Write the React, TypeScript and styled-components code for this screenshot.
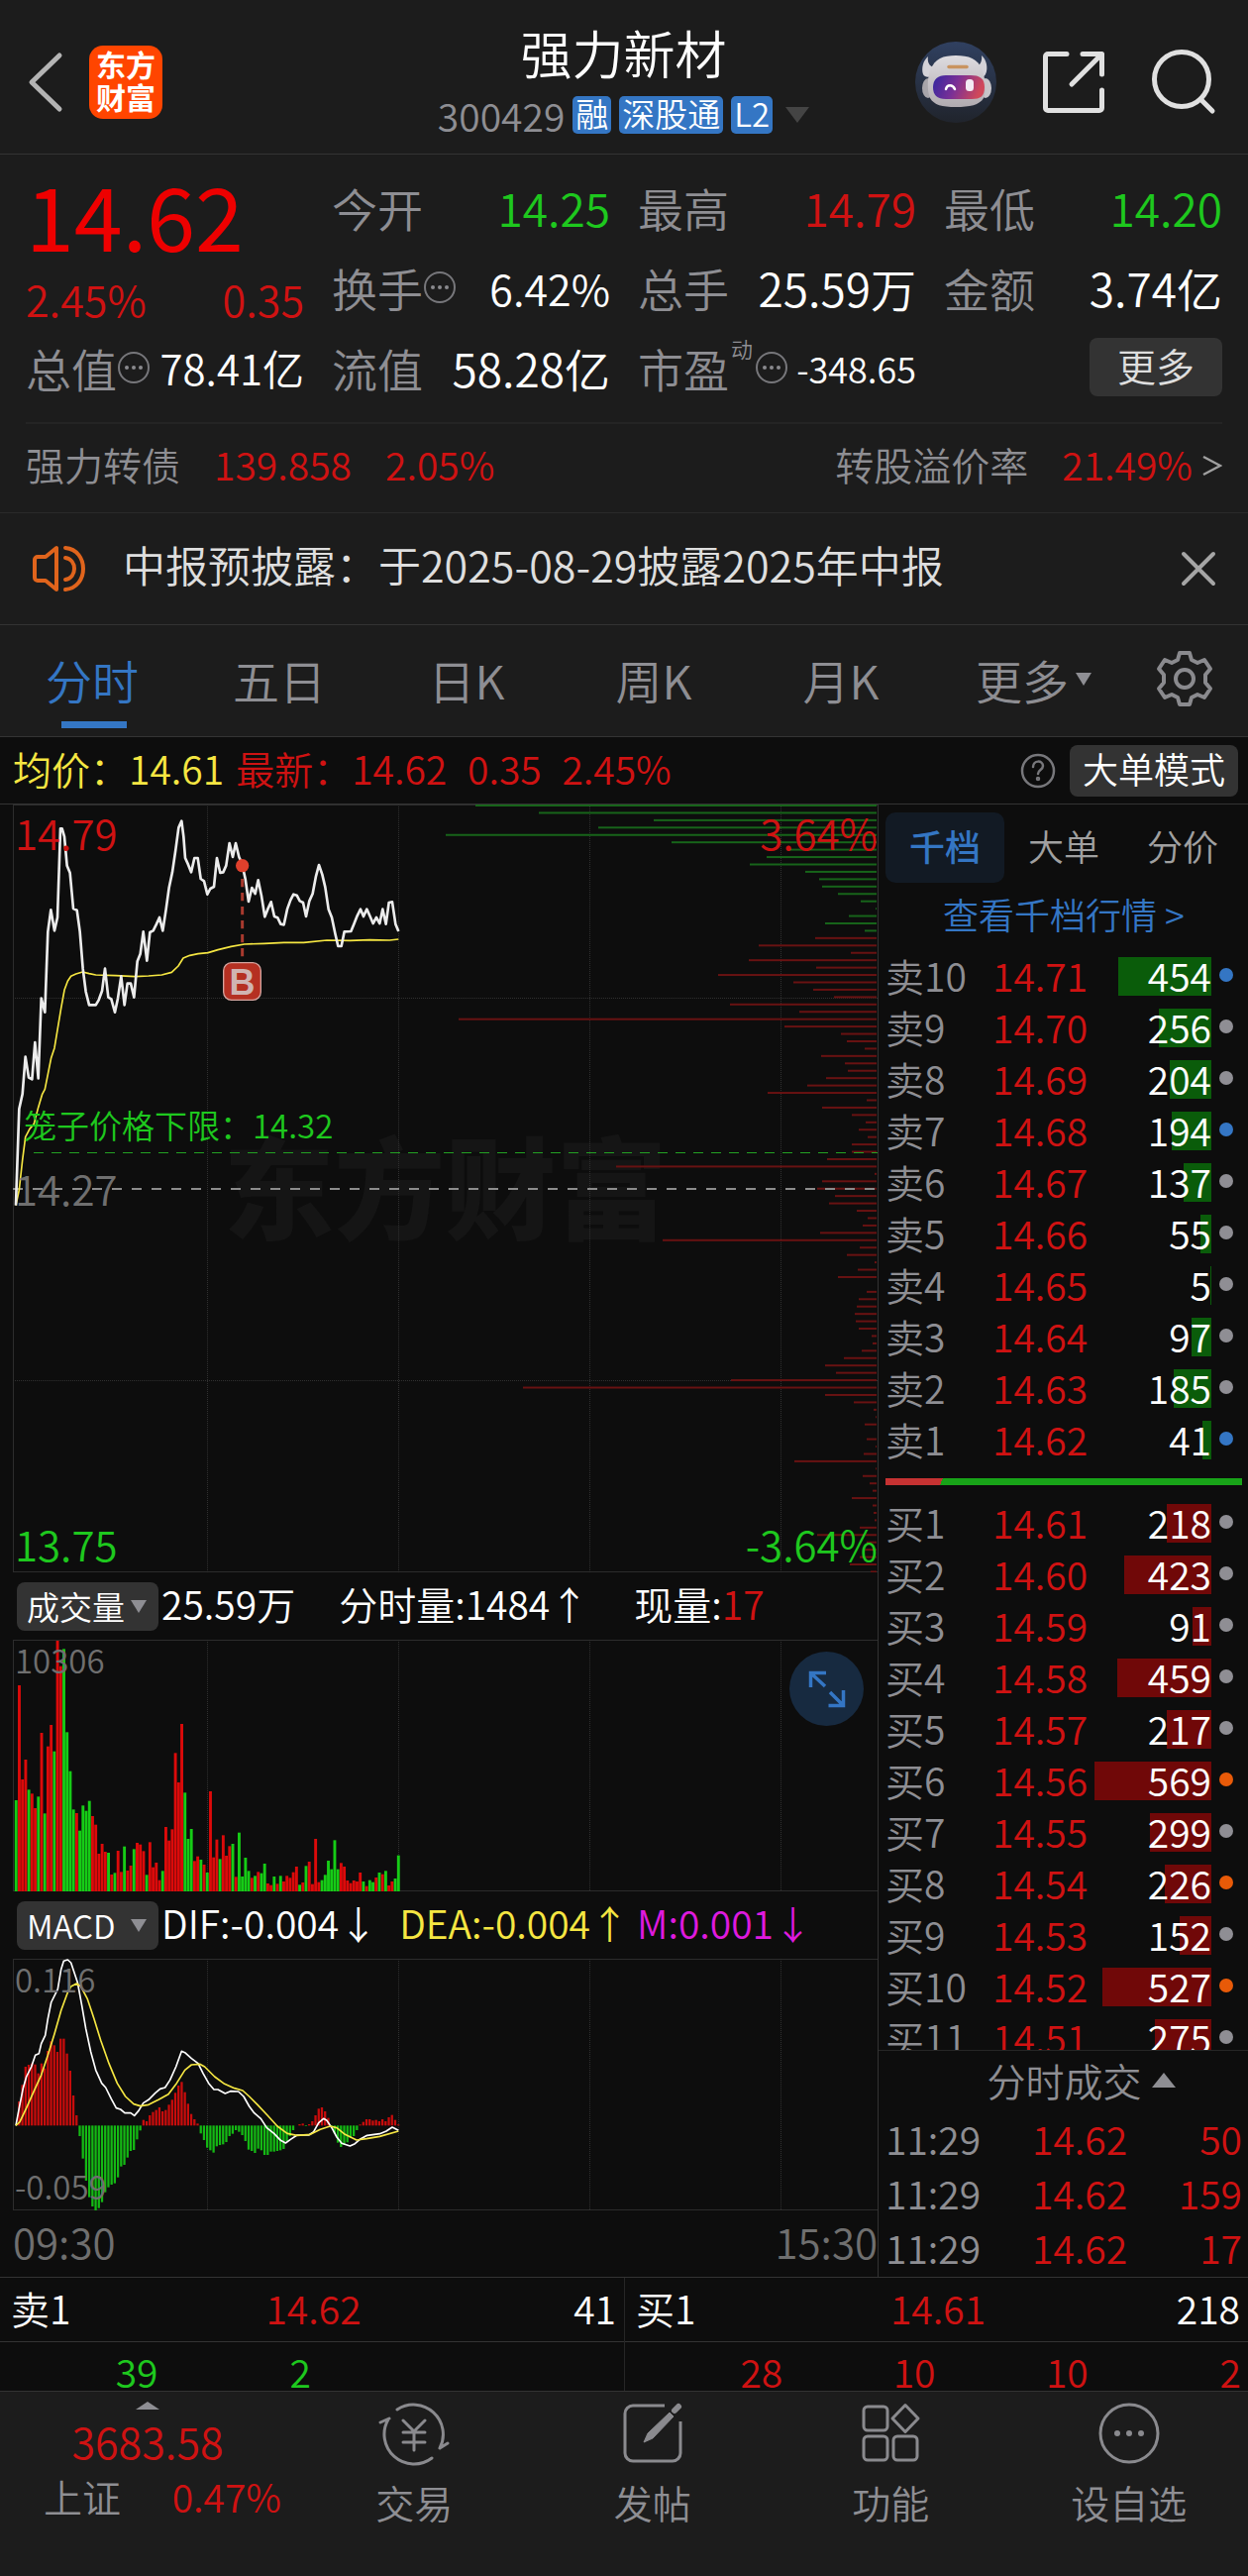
import React from 'react';
import styled, { createGlobalStyle, css } from 'styled-components';

const c = {
  panel: '#1c1c1c',
  dark: '#0d0d0d',
  line: '#333333',
  grid: '#262626',
  grey: '#8e8e93',
  dim: '#6f6f6f',
  white: '#ffffff',
  soft: '#dedede',
  red: '#cf1212',
  hot: '#ee0000',
  green: '#1ec81e',
  blue: '#3476c4',
  yellow: '#f5e642',
  pink: '#de1ade',
  chip: '#333333',
};

const Global = createGlobalStyle`
  * { box-sizing: border-box; }
  body { margin: 0; background: ${c.panel}; }
  body, button, select {
    font-family: "Noto Sans CJK SC", "Noto Sans", sans-serif;
    font-weight: 350;
  }
  button { border: 0; padding: 0; background: none; color: inherit; cursor: pointer; }
  h1, p, dl, dd, dt { margin: 0; font-weight: inherit; }
  svg { display: block; }
  a { color: inherit; text-decoration: none; }
`;

type Tone = { $tone?: string };
const Tinted = styled.span<Tone>`
  color: ${(p) => p.$tone ?? c.red};
`;

const Page = styled.div`
  background: ${c.panel};
  color: ${c.white};
  min-height: 100vh;
  display: flex;
  flex-direction: column;
`;

/* ---------- header ---------- */
const Header = styled.header`
  display: grid;
  grid-template-columns: 1fr auto 1fr;
  align-items: center;
  height: 156px;
  padding: 10px 32px 0 28px;
  border-bottom: 1px solid ${c.line};
`;
const HeaderSide = styled.div<{ $end?: boolean }>`
  display: flex;
  align-items: center;
  gap: ${(p) => (p.$end ? '46px' : '26px')};
  justify-content: ${(p) => (p.$end ? 'flex-end' : 'flex-start')};
`;
const Logo = styled.a`
  display: grid;
  place-content: center;
  width: 74px;
  height: 74px;
  border-radius: 14px;
  background: #ff4500;
  font-size: 30px;
  font-weight: 700;
  line-height: 33px;
  padding-bottom: 3px;
`;
const Heading = styled.div`
  display: flex;
  flex-direction: column;
  align-items: center;
  padding: 0 0 4px 3px;
`;
const Title = styled.h1`
  font-size: 52px;
  font-weight: 350;
  line-height: 70px;
`;
const SubTitle = styled.div`
  display: flex;
  align-items: center;
  gap: 8px;
  font-size: 39px;
  line-height: 56px;
  color: ${c.grey};
`;
const Tag = styled.span`
  height: 38px;
  padding: 0 3px;
  border-radius: 5px;
  background: ${c.blue};
  color: ${c.white};
  font-size: 33px;
  line-height: 34px;
`;
const Triangle = styled.i<{ $w: number; $h: number; $up?: boolean; $tone?: string; $gap?: number }>`
  display: inline-block;
  width: 0;
  height: 0;
  margin-left: ${(p) => p.$gap ?? 0}px;
  border-left: ${(p) => p.$w}px solid transparent;
  border-right: ${(p) => p.$w}px solid transparent;
  ${(p) =>
    p.$up
      ? css`border-bottom: ${p.$h}px solid ${p.$tone ?? c.grey};`
      : css`border-top: ${p.$h}px solid ${p.$tone ?? c.grey};`}
`;

/* ---------- quote ---------- */
const Quote = styled.section`
  display: grid;
  grid-template-columns: repeat(4, minmax(0, 1fr));
  grid-auto-rows: 81px;
  column-gap: 28px;
  padding: 12px 26px 15px;
`;
const PriceBlock = styled.div`
  grid-row: span 2;
`;
const BigPrice = styled.p`
  color: ${c.hot};
  font-size: 88px;
  font-weight: 400;
  line-height: 96px;
`;
const Change = styled.p`
  display: flex;
  justify-content: space-between;
  padding-top: 8px;
  color: ${c.red};
  font-size: 43px;
  line-height: 58px;
`;
const Stat = styled.dl`
  display: flex;
  align-items: center;
  justify-content: space-between;
  font-size: 46px;
  line-height: 78px;
  white-space: nowrap;
`;
const StatLabel = styled.dt`
  display: flex;
  align-items: center;
  color: ${c.grey};
`;
const Sup = styled.sup`
  align-self: flex-start;
  padding: 7px 2px 0;
  font-size: 22px;
  line-height: 24px;
`;
const StatValue = styled.dd<Tone & { $size?: number }>`
  color: ${(p) => p.$tone ?? c.white};
  font-size: ${(p) => p.$size ?? 46}px;
`;
const MoreButton = styled.button`
  justify-self: end;
  align-self: center;
  width: 134px;
  height: 59px;
  border-radius: 8px;
  background: ${c.chip};
  color: ${c.soft};
  font-size: 39px;
  line-height: 54px;
  padding-bottom: 5px;
`;

const BondRow = styled.a`
  display: flex;
  align-items: center;
  gap: 34px;
  height: 91px;
  margin: 0 26px;
  padding-bottom: 10px;
  border-top: 2px solid #242424;
  color: ${c.grey};
  font-size: 39px;
  line-height: 78px;
`;
const Push = styled.span`
  margin-left: auto;
`;
const BondEnd = styled.span`
  display: flex;
  align-items: center;
  gap: 10px;
`;
const Chevron = styled.svg`
  margin-top: 5px;
`;

const Notice = styled.section`
  display: flex;
  align-items: center;
  height: 114px;
  padding: 0 32px;
  border-top: 1px solid #2a2a2a;
  border-bottom: 1px solid ${c.line};
  color: ${c.soft};
  font-size: 43px;
  line-height: 60px;
`;
const NoticeText = styled.p`
  flex: 1;
  padding: 0 0 10px 36px;
`;

/* ---------- period tabs ---------- */
const Periods = styled.nav`
  display: grid;
  grid-template-columns: repeat(6, 3fr) 2fr;
  height: 113px;
  border-bottom: 1px solid ${c.line};
`;
const Period = styled.button<{ $on?: boolean; $menu?: boolean }>`
  display: flex;
  align-items: center;
  justify-content: center;
  padding: ${(p) => (p.$menu ? '0 0 4px 8px' : '0 3px 4px 0')};
  color: ${(p) => (p.$on ? c.blue : c.grey)};
  font-size: 47px;
  ${(p) =>
    p.$on &&
    css`
      background: linear-gradient(${c.blue}, ${c.blue}) center 97px / 66px 7px no-repeat;
    `}
`;

/* ---------- charts ---------- */
const Board = styled.main`
  background: ${c.dark};
`;
const InfoBar = styled.div`
  display: flex;
  align-items: center;
  height: 68px;
  padding: 0 10px 0 13px;
  border-bottom: 1px solid ${c.line};
  font-size: 39px;
  line-height: 58px;
  white-space: pre;
`;
const InfoText = styled.span<Tone>`
  color: ${(p) => p.$tone};
  padding: 0 12px 6px 0;
`;
const ModeButton = styled.button`
  width: 170px;
  height: 52px;
  margin-left: 14px;
  padding-bottom: 5px;
  border-radius: 8px;
  background: ${c.chip};
  color: ${c.white};
  font-size: 36px;
  line-height: 46px;
`;
const Columns = styled.div`
  display: grid;
  grid-template-columns: minmax(0, 1fr) 374px;
`;
const Charts = styled.div`
  min-width: 0;
`;
const ChartBox = styled.div<{ $h: number }>`
  position: relative;
  height: ${(p) => p.$h}px;
  margin-left: 13px;
`;
const Plot = styled.svg`
  position: absolute;
  inset: 0;
  width: 100%;
  height: 100%;
`;
const Mark = styled.span<{ $at: 'tl' | 'bl' | 'tr' | 'br' | 'mid' | 'cage'; $tone: string; $small?: boolean }>`
  position: absolute;
  color: ${(p) => p.$tone};
  font-size: ${(p) => (p.$small ? 33 : 42)}px;
  line-height: ${(p) => (p.$small ? 32 : 40)}px;
  ${(p) =>
    ({
      tl: `left: 2px; top: ${p.$small ? 4 : 8}px;`,
      bl: 'left: 2px; bottom: 9px;',
      tr: 'right: 0; top: 8px;',
      br: 'right: 0; bottom: 9px;',
      mid: 'left: 2px; top: 367px;',
      cage: 'left: 11px; top: 307px;',
    })[p.$at]}
`;
const Watermark = styled.span`
  position: absolute;
  inset: 0;
  display: grid;
  place-items: center;
  color: #151515;
  font-size: 112px;
  font-weight: 900;
  line-height: 120px;
  padding-bottom: 12px;
`;
const IndicatorRow = styled.div`
  display: flex;
  align-items: center;
  height: 68px;
  padding-left: 17px;
  font-size: 39px;
  line-height: 58px;
  white-space: pre;
`;
const Picker = styled.label`
  display: grid;
  grid-template-columns: 1fr 28px;
  align-items: center;
  width: 143px;
  height: 49px;
  margin-right: 3px;
  border-radius: 8px;
  background: ${c.chip};
`;
const PickerSelect = styled.select`
  grid-area: 1 / 1 / 2 / 3;
  width: 100%;
  height: 49px;
  padding: 0 0 4px 10px;
  border: 0;
  background: none;
  appearance: none;
  color: ${c.white};
  font-size: 33px;
`;
const PickerArrow = styled(Triangle)`
  grid-area: 1 / 2;
  pointer-events: none;
`;
const IndicatorText = styled.span<Tone & { $end: number }>`
  color: ${(p) => p.$tone ?? c.white};
  padding: 0 ${(p) => p.$end}px 6px 0;
`;
const Expand = styled.button`
  position: absolute;
  right: 14px;
  top: 12px;
  display: grid;
  place-items: center;
  width: 75px;
  height: 75px;
  border-radius: 50%;
  background: #172a40;
`;
const TimeAxis = styled.div`
  display: flex;
  justify-content: space-between;
  height: 67px;
  padding: 0 0 0 13px;
  color: ${c.dim};
  font-size: 42px;
  line-height: 62px;
`;

/* ---------- order book ---------- */
const Book = styled.aside`
  display: flex;
  flex-direction: column;
  min-height: 0;
  padding: 8px 6px 0 7px;
  border-left: 1px solid ${c.line};
`;
const BookTabs = styled.div`
  display: grid;
  grid-template-columns: repeat(3, 1fr);
`;
const BookTab = styled.button<{ $on?: boolean }>`
  height: 71px;
  padding-bottom: 5px;
  border-radius: 10px;
  background: ${(p) => (p.$on ? '#121a24' : 'none')};
  color: ${(p) => (p.$on ? c.blue : '#a0a0a0')};
  font-size: 36px;
  font-weight: ${(p) => (p.$on ? 500 : 350)};
`;
const BookLink = styled.a`
  height: 69px;
  color: ${c.blue};
  font-size: 36px;
  line-height: 62px;
  text-align: center;
`;
const Ladder = styled.table`
  width: 100%;
  border-collapse: collapse;
  table-layout: fixed;
  font-size: 39px;
  line-height: 48px;
  td, th { height: 52px; padding: 0 0 4px; font-weight: 350; }
`;
const LadderName = styled.th`
  width: 108px;
  color: ${c.grey};
  text-align: left;
  white-space: nowrap;
`;
const LadderPrice = styled.td`
  width: 98px;
  color: ${c.red};
`;
const LadderQty = styled.td`
  position: relative;
  text-align: right;
`;
const QtyText = styled.span`
  position: relative;
`;
const QtyBar = styled.span<{ $sell: boolean }>`
  position: absolute;
  right: 0;
  top: 6px;
  height: 39px;
  background: ${(p) => (p.$sell ? '#0a5c0a' : '#700808')};
`;
const LadderDot = styled.td`
  width: 31px;
`;
const Dot = styled.i<Tone>`
  display: block;
  width: 14px;
  height: 14px;
  margin-left: 8px;
  border-radius: 50%;
  background: ${(p) => p.$tone};
`;
const Balance = styled.div`
  height: 7px;
  margin: 12px 0 4px;
  background: linear-gradient(115deg, #c63232 16%, #18a318 16%);
`;
const BuyScroll = styled.div`
  flex: 1 1 0;
  min-height: 0;
  padding-top: 9px;
  overflow: hidden;
`;
const TradesHead = styled.button`
  display: flex;
  align-items: center;
  justify-content: center;
  height: 64px;
  margin: 0 -6px 0 -7px;
  padding: 0 0 5px 36px;
  border-top: 1px solid ${c.grid};
  color: ${c.grey};
  font-size: 39px;
  line-height: 56px;
`;
const Trades = styled.table`
  width: 100%;
  border-collapse: collapse;
  color: ${c.red};
  font-size: 39px;
  line-height: 48px;
  td { height: 55px; padding: 0 0 5px; }
  td:first-child { width: 148px; color: ${c.grey}; }
  td:last-child { text-align: right; }
`;

/* ---------- level-one strip ---------- */
const Strip = styled.section`
  display: grid;
  grid-template-columns: 1fr 1fr;
  border-top: 1px solid ${c.line};
  border-bottom: 1px solid ${c.line};
  background: ${c.dark};
  font-size: 39px;
`;
const StripSide = styled.div`
  & + & { border-left: 1px solid ${c.grid}; }
`;
const StripTop = styled.div`
  display: grid;
  grid-template-columns: 1fr auto 1fr;
  height: 65px;
  padding: 0 8px 0 11px;
  border-bottom: 1px solid ${c.line};
  line-height: 60px;
  & > :last-child { text-align: right; }
`;
const StripQueue = styled.div<Tone>`
  display: grid;
  grid-template-columns: repeat(4, 1fr);
  height: 49px;
  padding: 0 7px 0 5px;
  color: ${(p) => p.$tone};
  line-height: 58px;
  text-align: right;
`;

/* ---------- bottom bar ---------- */
const BottomBar = styled.nav`
  display: grid;
  grid-template-columns: 298px repeat(4, 1fr);
  flex: 1;
  align-items: start;
  color: ${c.grey};
  font-size: 39px;
`;
const IndexCell = styled.a`
  display: flex;
  flex-direction: column;
  align-items: center;
  padding-top: 10px;
`;
const IndexValue = styled.span`
  color: ${c.red};
  font-size: 43px;
  line-height: 62px;
`;
const IndexRow = styled.span`
  display: flex;
  justify-content: space-between;
  align-self: stretch;
  padding: 0 14px 0 44px;
  line-height: 50px;
`;
const NavItem = styled.button`
  display: flex;
  flex-direction: column;
  align-items: center;
  padding-top: 7px;
  font-size: 39px;
  line-height: 56px;
  gap: 6px;
`;

/* ---------- icons ---------- */
const InfoDots = () => (
  <svg width="34" height="34" viewBox="0 0 34 34" fill="none" stroke="#77777b" strokeWidth="2">
    <circle cx="17" cy="17" r="15" />
    <g fill="#8a8a8e" stroke="none">
      <circle cx="10" cy="17" r="2" /><circle cx="17" cy="17" r="2" /><circle cx="24" cy="17" r="2" />
    </g>
  </svg>
);
const BackIcon = () => (
  <svg width="36" height="62" viewBox="0 0 36 62" fill="none" stroke="#b4b4b4" strokeWidth="5" strokeLinecap="round" strokeLinejoin="round">
    <path d="M32 4 4 31 32 58" />
  </svg>
);
const Robot = () => (
  <svg width="82" height="82" viewBox="0 0 82 82">
    <defs>
      <linearGradient id="sky" x1="0" y1="0" x2="0" y2="1"><stop offset="0" stopColor="#304060" /><stop offset="1" stopColor="#20242c" /></linearGradient>
      <linearGradient id="visor" x1="0" y1="0" x2="1" y2="0.2"><stop offset="0" stopColor="#3326a0" /><stop offset=".5" stopColor="#7a3096" /><stop offset="1" stopColor="#d0485a" /></linearGradient>
      <linearGradient id="shell" x1="0" y1="0" x2="0" y2="1"><stop offset="0" stopColor="#dedce0" /><stop offset="1" stopColor="#b0abb0" /></linearGradient>
    </defs>
    <circle cx="41" cy="41" r="41" fill="url(#sky)" />
    <path d="M13 15c-5 4-7 12-5 18 2 4 8 3 10 0l1-7c-5-1-7-6-6-11ZM67 14c5 4 7 13 4 19-2 4-8 3-10 0l-1-7c5-1 8-6 7-12Z" fill="#d4d2d8" />
    <ellipse cx="13" cy="47" rx="6" ry="10" fill="#a8a5aa" />
    <ellipse cx="71" cy="47" rx="6" ry="10" fill="#c8c5c9" />
    <path d="M15 29C20 17 28 14 41 14s22 3 27 15c3 10 4 22 1 28-4 7-14 9-28 9s-22-2-26-9c-3-7-3-19 0-28Z" fill="url(#shell)" />
    <path d="M34 25.500h18" stroke="#c9935f" strokeWidth="3.500" strokeLinecap="round" />
    <path d="M18 46c0-8 5-12 13-12h25c9 0 14 3 14 12s-4 12-13 12H31c-9 0-13-4-13-12Z" fill="url(#visor)" />
    <path d="M31 48c1-5 7-5 9 0" fill="none" stroke="#fff" strokeWidth="2.500" strokeLinecap="round" />
    <rect x="51" y="38" width="8" height="12" rx="3.500" fill="#f3eaf3" />
  </svg>
);
const ShareIcon = () => (
  <svg width="64" height="64" viewBox="0 0 64 64" fill="none" stroke="#e0e0e0" strokeWidth="5" strokeLinecap="round" strokeLinejoin="round">
    <path d="M25 3.500H6A2.500 2.500 0 0 0 3.500 6v52A2.500 2.500 0 0 0 6 60.500h52a2.500 2.500 0 0 0 2.500-2.500V40M41 3.500h19.500V24M60 4 30 34" />
  </svg>
);
const SearchIcon = () => (
  <svg width="66" height="66" viewBox="0 0 66 66" fill="none" stroke="#e0e0e0" strokeWidth="5" strokeLinecap="round">
    <circle cx="31" cy="30" r="27.500" /><path d="m50 50 12 12" />
  </svg>
);
const Speaker = () => (
  <svg width="56" height="48" viewBox="0 0 56 48" fill="none" stroke="#e0641c" strokeWidth="4" strokeLinecap="round" strokeLinejoin="round">
    <path d="M25 3v42L14 36H6a3 3 0 0 1-3-3V15a3 3 0 0 1 3-3h8L25 3ZM34 3c24 2 24 40 0 42M34 13c12 2 12 20 0 22" />
  </svg>
);
const CloseIcon = () => (
  <svg width="36" height="36" viewBox="0 0 36 36" stroke="#a5a5a5" strokeWidth="4" strokeLinecap="round"><path d="m3 3 30 30M33 3 3 33" /></svg>
);
const Gear = () => (
  <svg width="58" height="58" viewBox="0 0 58 58" fill="none" stroke="#8a8a8e" strokeWidth="4" strokeLinejoin="round">
    <path d="M24 3h10l2 7 6 3 7-3 6 9-5 6v8l5 6-6 9-7-3-6 3-2 7H24l-2-7-6-3-7 3-6-9 5-6v-8l-5-6 6-9 7 3 6-3 2-7Z" />
    <circle cx="29" cy="29" r="9" />
  </svg>
);
const Help = () => (
  <svg width="36" height="36" viewBox="0 0 36 36" fill="none" stroke="#77777b" strokeWidth="2.500" strokeLinecap="round">
    <circle cx="18" cy="18" r="16" /><path d="M13 14c0-7 10-7 10-1 0 4-5 4-5 8" /><circle cx="18" cy="26" r="1" />
  </svg>
);
const ExpandIcon = () => (
  <svg width="38" height="38" viewBox="0 0 38 38" fill="none" stroke={c.blue} strokeWidth="3.500">
    <path d="M2.500 17V2.500H18M3 3l14 13M20.500 35.500h15V20M35 35 22 22" />
  </svg>
);
const TradeIcon = () => (
  <svg width="72" height="70" viewBox="0 0 72 70" fill="none" stroke="#8a8a8e" strokeWidth="3" strokeLinecap="round" strokeLinejoin="round">
    <path d="M19 11A30 30 0 0 1 62 50M54 60A30 30 0 0 1 10 21M11 20l-9 4M62 50l8-5M25 22l11 11 11-11M36 33v19M25 34h22M25 44h22" />
  </svg>
);
const PostIcon = () => (
  <svg width="70" height="70" viewBox="0 0 70 70" fill="none" stroke="#8a8a8e" strokeWidth="3" strokeLinejoin="round">
    <path d="M47 7H15a8 8 0 0 0-8 8v40a8 8 0 0 0 8 8h40a8 8 0 0 0 8-8V23" />
    <path d="m26 44 4-9 22-21 4 4-21 22-9 4Z" fill="#8a8a8e" strokeWidth="1" />
    <path d="m57 12 4-4" strokeWidth="6" strokeLinecap="round" />
  </svg>
);
const GridIcon = () => (
  <svg width="70" height="70" viewBox="0 0 70 70" fill="none" stroke="#8a8a8e" strokeWidth="3" strokeLinejoin="round">
    <rect x="8" y="8" width="24" height="24" rx="4" /><rect x="8" y="38" width="24" height="24" rx="4" /><rect x="38" y="38" width="24" height="24" rx="4" />
    <path d="M50 6.500 63 20 50 33.500 37 20Z" />
  </svg>
);
const MoreIcon = () => (
  <svg width="70" height="70" viewBox="0 0 70 70" fill="none" stroke="#8a8a8e" strokeWidth="3">
    <circle cx="35" cy="35" r="29" />
    <g fill="#8a8a8e" stroke="none"><circle cx="23" cy="35" r="3" /><circle cx="35" cy="35" r="3" /><circle cx="47" cy="35" r="3" /></g>
  </svg>
);

/* ---------- data ---------- */
const pricePath =
  '48,1247 58,955 68,910 77,797 87,860 97,865 106,753 116,862 125,620 136,662 145,418 154,352 165,415 174,375 183,106 188,106 195,130 203,218 212,240 222,348 233,353 242,418 251,530 260,600 270,640 290,640 299,625 309,598 318,530 328,617 337,622 348,662 357,620 367,553 377,640 386,575 396,575 406,617 416,508 425,485 434,418 445,506 454,420 464,415 474,395 483,375 493,415 503,350 512,285 522,238 532,170 541,103 550,83 556,130 561,195 570,215 579,238 589,195 599,195 608,258 618,265 628,305 637,288 648,282 657,195 667,240 676,238 685,218 695,150 705,192 714,150 724,192 733,212 743,258 753,327 763,285 773,303 782,262 792,310 802,373 811,350 821,328 831,372 841,376 850,395 860,397 870,350 880,322 889,305 899,308 908,325 918,330 927,372 937,325 947,303 957,250 966,216 976,245 985,283 995,350 1005,375 1015,423 1024,462 1034,462 1043,418 1063,417 1072,395 1082,370 1092,350 1101,372 1111,350 1121,372 1130,393 1140,375 1150,393 1159,350 1169,395 1178,330 1188,328 1198,395 1207,417';
const averagePath =
  '48,1247 58,1200 68,1110 77,1040 90,1015 103,1000 116,950 128,910 136,895 145,850 155,800 165,770 175,710 185,650 195,595 205,568 215,553 230,546 250,540 270,545 290,549 350,551 410,554 450,552 490,549 520,541 540,522 555,498 575,490 600,485 630,482 660,473 700,463 740,456 800,454 860,451 920,451 990,444 1060,445 1120,443 1180,444 1207,441';
const depth = [
  405, 341, 225, 281, 435, 207, 89, 111, 128, 72, 58, 55, 39, 16, 1, 28, 52, 12, 62, 119, 26, 129, 61, 160, 84, 64, 43, 148, 78, 422,
  93, 36, 30, 12, 56, 32, 29, 51, 70, 110, 10, 55, 25, 11, 18, 9, 25, 25, 50, 263, 2, 55, 60, 42, 48, 20, 9, 14, 57, 216, 17, 30, 2,
  19, 39, 0, 10, 18, 20, 22, 21, 18, 5, 4, 15, 33, 52, 41, 147, 357, 52, 23, 3, 1, 12, 0, 10, 1, 13, 83, 1, 14, 7, 4, 25, 4, 3, 2,
  17, 60, 10, 12, 17, 27, 6,
];
const volume =
  '708g 360r 645r 585r 676g 688r 732r 697g 504r 748g 545r 480r 560g 225r 302r 250g 502g 620g 736g 747r 800g 724g 740g 710g 756r 782r 870r 840r 864r 867g 933r 928g 861r 925r 848g 921r 906r 856g 837r 842r 862r 934g 835r 911r 897r 950r 922g 789r 830r 796r 565r 654r 477r 685g 825g 795g 892r 878r 888g 903r 927g 681r 881r 827r 886g 814r 876r 847r 840g 940r 806g 939g 882g 922g 943r 937g 925r 929g 900g 960r 965r 939g 961r 937g 954r 937r 943r 926r 909r 964g 957r 907g 894r 962r 825r 956r 950g 934g 891g 917g 829g 917g 898r 909r 951r 959r 951r 954r 927r 954g 968r 950g 956g 942r 927g 932r 922g 966r 954r 945g 875g'.split(' ');
const macd = [
  733, 660, 610, 555, 549, 545, 548, 575, 545, 560, 507, 478, 490, 510, 470, 470, 515, 567, 642, 702, 765, 833, 900, 950, 978, 990,
  983, 965, 935, 920, 912, 908, 890, 857, 852, 830, 810, 807, 775, 748, 716, 720, 702, 692, 686, 678, 690, 686, 670, 655, 634, 612,
  601, 632, 667, 698, 714, 727, 757, 777, 800, 808, 815, 796, 792, 790, 783, 765, 758, 747, 752, 762, 780, 806, 810, 816, 803, 808,
  822, 822, 812, 812, 810, 808, 804, 780, 765, 747, 733, 729, 727, 735, 729, 720, 702, 682, 678, 690, 710, 735, 757, 785, 798, 792,
  784, 770, 765, 747, 730, 722, 714, 714, 718, 716, 720, 714, 720, 708, 701, 716, 730,
];
const difPath =
  '48,733 58,680 70,620 80,585 95,555 107,520 118,515 125,485 137,460 145,410 155,360 175,320 185,260 193,235 205,231 215,240 235,300 248,370 260,440 275,510 290,565 308,605 320,618 337,652 352,680 365,684 378,695 396,695 407,703 420,688 434,665 450,655 470,635 485,622 500,618 515,595 533,555 550,508 560,512 580,530 600,545 615,575 632,605 648,624 660,624 682,636 698,629 722,630 738,645 755,675 770,695 790,712 808,740 830,757 850,778 865,786 880,775 900,762 935,762 950,752 965,725 980,712 990,718 1005,740 1020,768 1035,787 1060,795 1075,788 1090,775 1112,763 1150,758 1170,750 1188,738 1207,748';
const deaPath =
  '48,733 60,722 80,680 100,635 125,580 145,520 165,455 185,385 205,330 215,312 232,303 245,312 265,350 285,410 305,475 330,545 355,605 380,645 405,668 425,674 450,670 480,655 510,638 535,605 560,565 580,549 605,547 620,555 650,585 680,607 710,620 735,627 755,645 780,670 810,702 840,735 870,757 900,763 940,760 970,745 1000,735 1020,740 1045,760 1080,777 1110,773 1150,766 1207,750';

type Level = [name: string, price: string, qty: number, dot: string];
const dotGrey = '#8f8e94';
const sells: Level[] = [
  ['卖10', '14.71', 454, c.blue], ['卖9', '14.70', 256, dotGrey], ['卖8', '14.69', 204, dotGrey], ['卖7', '14.68', 194, c.blue],
  ['卖6', '14.67', 137, dotGrey], ['卖5', '14.66', 55, dotGrey], ['卖4', '14.65', 5, dotGrey], ['卖3', '14.64', 97, dotGrey],
  ['卖2', '14.63', 185, dotGrey], ['卖1', '14.62', 41, c.blue],
];
const orange = '#e85a08';
const buys: Level[] = [
  ['买1', '14.61', 218, dotGrey], ['买2', '14.60', 423, dotGrey], ['买3', '14.59', 91, dotGrey], ['买4', '14.58', 459, dotGrey],
  ['买5', '14.57', 217, dotGrey], ['买6', '14.56', 569, orange], ['买7', '14.55', 299, dotGrey], ['买8', '14.54', 226, orange],
  ['买9', '14.53', 152, dotGrey], ['买10', '14.52', 527, orange], ['买11', '14.51', 275, dotGrey],
];
const trades = [['11:29', '14.62', '50'], ['11:29', '14.62', '159'], ['11:29', '14.62', '17']];

/* ---------- pieces ---------- */
const columnsX = [196, 389, 582, 775];
const Frame = ({ h, rows = [] }: { h: number; rows?: number[] }) => (
  <g stroke="#303030" fill="none">
    <path d={`M.5 0V${h}M0 ${h - 0.5}H873M0 .5H873`} stroke="#2c2c2c" />
    {columnsX.map((x) => <path key={x} d={`M${x + 0.5} 0V${h}`} strokeDasharray="1 1" />)}
    {rows.map((y) => <path key={y} d={`M0 ${y + 0.5}H873`} strokeDasharray="1 1" />)}
  </g>
);

const Levels = ({ rows, sell }: { rows: Level[]; sell: boolean }) => (
  <Ladder>
    <tbody>
      {rows.map(([name, price, qty, dot]) => (
        <tr key={name}>
          <LadderName scope="row">{name}</LadderName>
          <LadderPrice>{price}</LadderPrice>
          <LadderQty>
            <QtyBar $sell={sell} style={{ width: Math.max(1, Math.round(qty * 0.208)) }} />
            <QtyText>{qty}</QtyText>
          </LadderQty>
          <LadderDot><Dot $tone={dot} /></LadderDot>
        </tr>
      ))}
    </tbody>
  </Ladder>
);

const StatCell = ({ label, value, tone, size, dots, sup }: { label: string; value: string; tone?: string; size?: number; dots?: boolean; sup?: string }) => (
  <Stat>
    <StatLabel>{label}{sup && <Sup>{sup}</Sup>}{dots && <InfoDots />}</StatLabel>
    <StatValue $tone={tone} $size={size}>{value}</StatValue>
  </Stat>
);

const IndicatorPicker = ({ name, options }: { name: string; options: string[] }) => (
  <Picker>
    <PickerSelect aria-label={name}>{options.map((o) => <option key={o}>{o}</option>)}</PickerSelect>
    <PickerArrow $w={8} $h={13} />
  </Picker>
);

export default function App() {
  return (
    <Page>
      <Global />
      <Header>
        <HeaderSide>
          <button aria-label="返回"><BackIcon /></button>
          <Logo href="#"><span>东方</span><span>财富</span></Logo>
        </HeaderSide>
        <Heading>
          <Title>强力新材</Title>
          <SubTitle>
            300429<Tag>融</Tag><Tag>深股通</Tag><Tag>L2</Tag>
            <Triangle $w={12} $h={16} $tone="#444" $gap={5} />
          </SubTitle>
        </Heading>
        <HeaderSide $end>
          <button aria-label="助手"><Robot /></button>
          <button aria-label="分享"><ShareIcon /></button>
          <button aria-label="搜索"><SearchIcon /></button>
        </HeaderSide>
      </Header>

      <Quote>
        <PriceBlock>
          <BigPrice>14.62</BigPrice>
          <Change><span>2.45%</span><span>0.35</span></Change>
        </PriceBlock>
        <StatCell label="今开" value="14.25" tone={c.green} />
        <StatCell label="最高" value="14.79" tone={c.red} />
        <StatCell label="最低" value="14.20" tone={c.green} />
        <StatCell label="换手" value="6.42%" size={43} dots />
        <StatCell label="总手" value="25.59万" />
        <StatCell label="金额" value="3.74亿" />
        <StatCell label="总值" value="78.41亿" size={42} dots />
        <StatCell label="流值" value="58.28亿" />
        <StatCell label="市盈" sup="动" value="-348.65" size={36} dots />
        <MoreButton>更多</MoreButton>
      </Quote>

      <BondRow href="#">
        <span>强力转债</span><Tinted>139.858</Tinted><Tinted>2.05%</Tinted>
        <Push>转股溢价率</Push>
        <BondEnd>
          <Tinted>21.49%</Tinted>
          <Chevron width="20" height="22" viewBox="0 0 20 22" fill="none" stroke="#a0a0a0" strokeWidth="2.500"><path d="M1 2 18 11 1 20" /></Chevron>
        </BondEnd>
      </BondRow>

      <Notice>
        <Speaker />
        <NoticeText>中报预披露：于2025-08-29披露2025年中报</NoticeText>
        <button aria-label="关闭"><CloseIcon /></button>
      </Notice>

      <Periods>
        <Period $on>分时</Period>
        <Period>五日</Period>
        <Period>日K</Period>
        <Period>周K</Period>
        <Period>月K</Period>
        <Period $menu>更多<Triangle $w={8} $h={13} $gap={7} /></Period>
        <Period aria-label="设置"><Gear /></Period>
      </Periods>

      <Board>
        <InfoBar>
          <InfoText $tone={c.yellow}>均价：14.61</InfoText>
          <InfoText $tone={c.red}>最新：14.62</InfoText>
          <InfoText $tone={c.red}> 0.35</InfoText>
          <InfoText $tone={c.red}> 2.45%</InfoText>
          <Push><Help /></Push>
          <ModeButton>大单模式</ModeButton>
        </InfoBar>

        <Columns>
          <Charts>
            <ChartBox $h={775}>
              <Watermark>东方财富</Watermark>
              <Plot viewBox="0 0 873 775" preserveAspectRatio="none">
                <Frame h={775} rows={[195, 581]} />
                {depth.map((w, i) => (
                  <rect key={i} x={872 - w} y={i * 7.437} width={w} height={2} fill={i < 18 ? '#17641a' : '#681212'} />
                ))}
                <path d="M21 351.500H873" stroke="#23a023" strokeDasharray="10 8" />
                <path d="M0 388H873" stroke="#8c8c8c" strokeWidth="2" strokeDasharray="10 10" />
                <g transform="translate(-13 -11) scale(.33333)" fill="none" strokeLinejoin="round">
                  <polyline points={averagePath} stroke={c.yellow} strokeWidth="5" />
                  <polyline points={pricePath} stroke="#ececec" strokeWidth="8" />
                  <path d="M734 258V495" stroke="#a83a2e" strokeWidth="9" strokeDasharray="25 17" />
                  <circle cx="734" cy="218" r="20" fill="#e0402c" />
                  <rect x="677" y="512" width="113" height="113" rx="24" fill="#b53022" stroke="#d3a49f" strokeWidth="4" />
                </g>
                <text x="231.500" y="192" textAnchor="middle" fontSize="36" fontWeight="700" fontFamily="Liberation Sans, sans-serif" fill="#d0b4b2">B</text>
              </Plot>
              <Mark $at="tl" $tone={c.red}>14.79</Mark>
              <Mark $at="tr" $tone={c.red}>3.64%</Mark>
              <Mark $at="cage" $tone={c.green} $small>笼子价格下限：14.32</Mark>
              <Mark $at="mid" $tone={c.dim}>14.27</Mark>
              <Mark $at="bl" $tone={c.green}>13.75</Mark>
              <Mark $at="br" $tone={c.green}>-3.64%</Mark>
            </ChartBox>

            <IndicatorRow>
              <IndicatorPicker name="副图一" options={['成交量', 'MACD']} />
              <IndicatorText $end={44}>25.59万</IndicatorText>
              <IndicatorText $end={46}>分时量:1484↑</IndicatorText>
              <IndicatorText $end={0}>现量:<Tinted>17</Tinted></IndicatorText>
            </IndicatorRow>
            <ChartBox $h={254}>
              <Plot viewBox="0 0 873 254" preserveAspectRatio="none">
                <Frame h={254} />
                {volume.map((v, i) => {
                  const h = (984 - parseInt(v, 10)) / 3;
                  return <rect key={i} x={1.8 + i * 3.217} y={254 - h} width={2.9} height={h} fill={v.endsWith('g') ? '#16cc16' : '#dc0a0a'} />;
                })}
              </Plot>
              <Mark $at="tl" $tone={c.dim} $small>10306</Mark>
              <Expand aria-label="放大"><ExpandIcon /></Expand>
            </ChartBox>

            <IndicatorRow>
              <IndicatorPicker name="副图二" options={['MACD', '成交量']} />
              <IndicatorText $end={22}>DIF:-0.004↓</IndicatorText>
              <IndicatorText $end={8} $tone={c.yellow}>DEA:-0.004↑</IndicatorText>
              <IndicatorText $end={0} $tone={c.pink}>M:0.001↓</IndicatorText>
            </IndicatorRow>
            <ChartBox $h={254}>
              <Plot viewBox="0 0 873 254" preserveAspectRatio="none">
                <Frame h={254} />
                {macd.map((v, i) => (
                  <rect key={i} x={2 + i * 3.217} y={(Math.min(v, 733) - 228) / 3} width={2.3} height={Math.abs(v - 733) / 3} fill={v > 733 ? '#14b814' : '#c80c0c'} />
                ))}
                <g transform="translate(-13 -76) scale(.33333)" fill="none" strokeWidth="5" strokeLinejoin="round">
                  <polyline points={difPath} stroke="#fff" />
                  <polyline points={deaPath} stroke={c.yellow} />
                </g>
              </Plot>
              <Mark $at="tl" $tone={c.dim} $small>0.116</Mark>
              <Mark $at="bl" $tone={c.dim} $small>-0.059</Mark>
            </ChartBox>
            <TimeAxis><span>09:30</span><span>15:30</span></TimeAxis>
          </Charts>

          <Book>
            <BookTabs>
              <BookTab $on>千档</BookTab>
              <BookTab>大单</BookTab>
              <BookTab>分价</BookTab>
            </BookTabs>
            <BookLink href="#">查看千档行情 &gt;</BookLink>
            <Levels rows={sells} sell />
            <Balance />
            <BuyScroll><Levels rows={buys} sell={false} /></BuyScroll>
            <TradesHead>分时成交<Triangle $w={12} $h={15} $up $gap={10} /></TradesHead>
            <Trades>
              <tbody>
                {trades.map(([t, p, q], i) => <tr key={i}><td>{t}</td><td>{p}</td><td>{q}</td></tr>)}
              </tbody>
            </Trades>
          </Book>
        </Columns>
      </Board>

      <Strip>
        <StripSide>
          <StripTop><span>卖1</span><Tinted>14.62</Tinted><span>41</span></StripTop>
          <StripQueue $tone={c.green}><span>39</span><span>2</span></StripQueue>
        </StripSide>
        <StripSide>
          <StripTop><span>买1</span><Tinted>14.61</Tinted><span>218</span></StripTop>
          <StripQueue $tone={c.red}><span>28</span><span>10</span><span>10</span><span>2</span></StripQueue>
        </StripSide>
      </Strip>

      <BottomBar>
        <IndexCell href="#">
          <Triangle $w={12} $h={8} $up />
          <IndexValue>3683.58</IndexValue>
          <IndexRow><span>上证</span><Tinted>0.47%</Tinted></IndexRow>
        </IndexCell>
        <NavItem><TradeIcon />交易</NavItem>
        <NavItem><PostIcon />发帖</NavItem>
        <NavItem><GridIcon />功能</NavItem>
        <NavItem><MoreIcon />设自选</NavItem>
      </BottomBar>
    </Page>
  );
}
